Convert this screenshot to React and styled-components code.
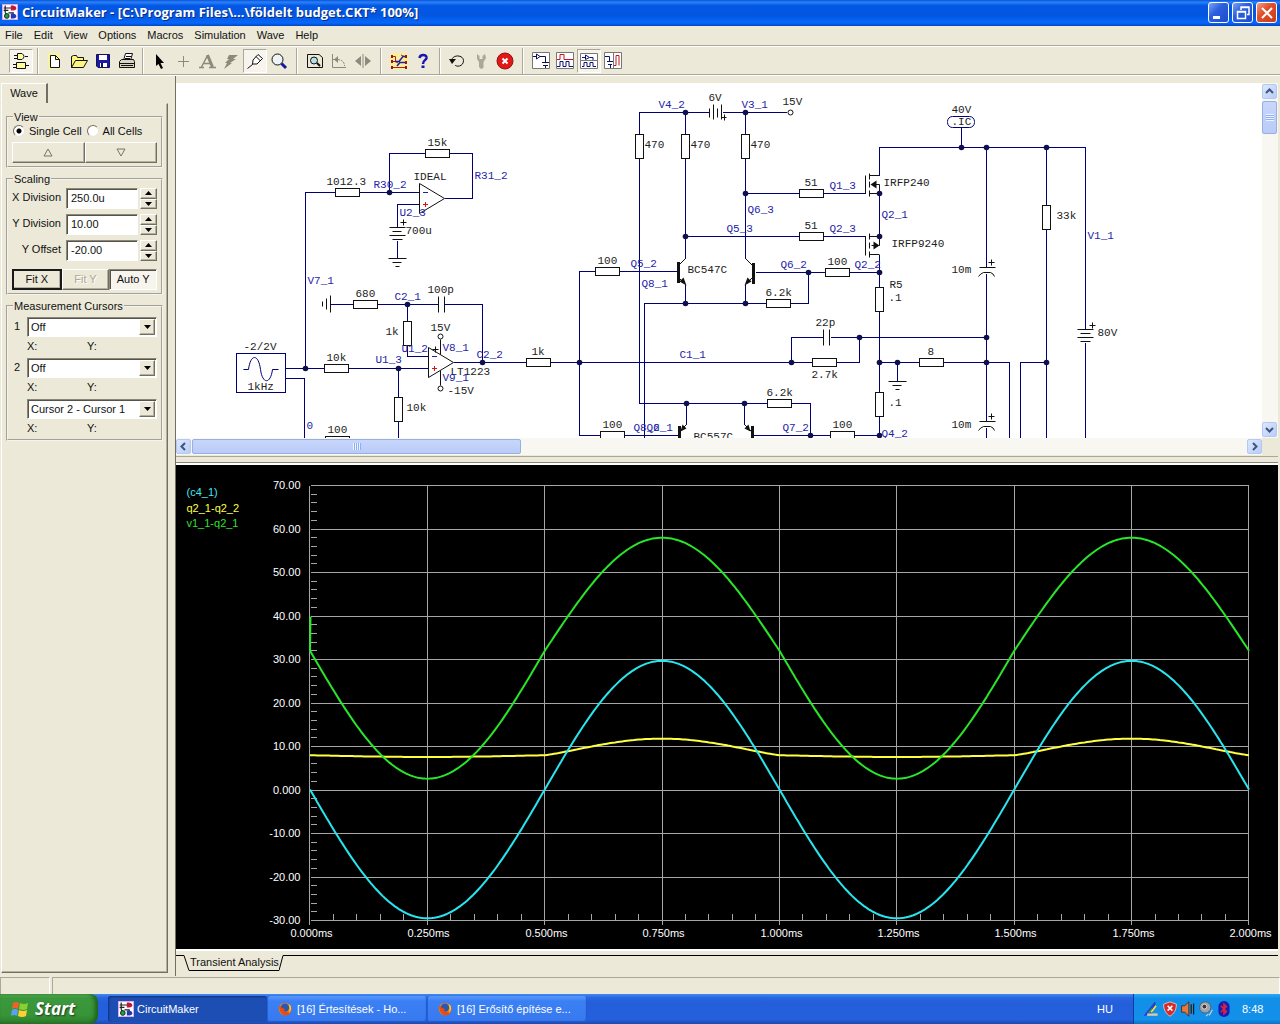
import React, { useState } from 'react'
import styled, { createGlobalStyle, css } from 'styled-components'

// schematic data, in sheet units

const wires = [
  '305,368 305,192 335,192', '359,192 419,192', '389,192 389,153 425,153', '449,153 472,153 472,198 444,198',
  '419,204 397,204 397,226', '397,240 397,258',
  '330,304 353,304', '377,304 438,304', '444,304 482,304 482,362', '407,304 407,321', '407,345 407,356 428,356',
  '285,368 324,368', '348,368 428,368', '285,378 304,378 304,440', '398,368 398,397', '398,421 398,440',
  '453,362 526,362', '550,362 812,362', '595,271 579,271 579,435 600,435', '619,271 677,271', '624,435 678,435',
  '709,112 639,112 639,134', '639,158 639,403 767,403', '685,112 685,134', '685,158 685,258',
  '722,112 786,112', '745,112 745,134', '745,158 745,258', '745,193 799,193', '685,236 799,236',
  '685,284 685,303', '745,284 745,303', '766,303 644,303 644,440', '790,303 808,303 808,272',
  '755,272 825,272', '849,272 879,272', '686,403 686,424', '744,403 744,424', '791,403 810,403 810,435',
  '753,435 830,435', '854,435 879,435', '823,193 865,193', '823,236 865,236',
  '879,175 879,147 1085,147 1085,329', '879,193 879,236', '879,254 879,287', '879,311 879,392', '879,416 879,435',
  '823,337 791,337 791,362', '830,337 986,337', '836,362 859,362 859,337', '879,362 919,362', '897,362 897,381',
  '943,362 1009,362 1009,440', '961,127 961,147', '986,147 986,267', '986,273 986,421', '986,427 986,440',
  '1046,147 1046,205', '1046,229 1046,440', '1046,362 1020,362 1020,440', '1085,342 1085,440'
]

const junctions = [
  [389, 192], [407, 304], [305, 368], [398, 368], [482, 362], [685, 112], [745, 112], [745, 193], [685, 236],
  [685, 303], [745, 303], [808, 272], [579, 362], [686, 403], [744, 403], [810, 435], [791, 362], [859, 337],
  [879, 193], [879, 236], [879, 272], [879, 362], [897, 362], [879, 435], [961, 147], [986, 147], [1046, 147],
  [986, 337], [986, 362], [1046, 362]
]

// left end of each resistor body
const horizontalResistors = [
  [425, 153], [335, 192], [353, 304], [324, 368], [325, 440], [526, 362], [595, 271], [766, 303], [767, 403],
  [600, 435], [799, 193], [799, 236], [825, 272], [812, 362], [830, 435], [919, 362]
]

// top end of each resistor body
const verticalResistors = [
  [407, 321], [398, 397], [639, 134], [685, 134], [745, 134], [879, 287], [879, 392], [1046, 205]
]

const partLabels = [
  ['15k', 427, 145], ['IDEAL', 413, 179], ['1012.3', 326, 184], ['700u', 405, 233], ['680', 355, 296],
  ['100p', 427, 292], ['1k', 385, 334], ['15V', 430, 330], ['LT1223', 450, 374], ['-15V', 447, 393],
  ['-2/2V', 243, 349], ['10k', 326, 360], ['1kHz', 247, 389], ['10k', 406, 410], ['100', 327, 432],
  ['6V', 708, 100], ['15V', 782, 104], ['470', 644, 147], ['470', 690, 147], ['470', 750, 147],
  ['100', 597, 263], ['BC547C', 687, 272], ['6.2k', 765, 295], ['1k', 531, 354], ['6.2k', 766, 395],
  ['100', 602, 427], ['BC557C', 693, 439], ['51', 804, 185], ['IRFP240', 883, 185], ['51', 804, 228],
  ['IRFP9240', 891, 246], ['100', 827, 264], ['R5', 889, 287], ['.1', 888, 300], ['22p', 815, 325],
  ['8', 927, 354], ['2.7k', 811, 377], ['.1', 888, 405], ['100', 832, 427], ['40V', 951, 112],
  ['.IC', 951, 124], ['33k', 1056, 218], ['10m', 951, 272], ['80V', 1097, 335], ['10m', 951, 427]
]

const nodeLabels = [
  ['R30_2', 373, 187], ['R31_2', 474, 178], ['U2_3', 399, 215], ['V7_1', 307, 283], ['C2_1', 394, 299],
  ['U1_2', 401, 351], ['V8_1', 442, 350], ['C2_2', 476, 357], ['U1_3', 375, 362], ['V9_1', 442, 380],
  ['0', 306, 428], ['V4_2', 658, 107], ['V3_1', 741, 107], ['Q6_3', 747, 212], ['Q5_3', 726, 231],
  ['Q5_2', 630, 266], ['Q8_1', 641, 286], ['Q6_2', 780, 267], ['C1_1', 679, 357], ['Q8_2', 633, 430],
  ['Q6_1', 646, 430], ['Q7_2', 782, 430], ['Q1_3', 829, 188], ['Q2_1', 881, 217], ['Q2_3', 829, 231],
  ['Q2_2', 854, 267], ['Q4_2', 881, 436], ['V1_1', 1087, 238]
]

const symbols = [
  // op amps
  'M419 183L444 198L419 213Z M428 347L453 362L428 377Z M440 339V354 M440 370V385 M432 349H438 M435 346V352',
  // bias battery and its ground
  'M389 227H405 M392 231H401 M389 235H405 M392 239H402 M388 258H406 M392 262H401 M395 266H399 M400 222H406 M403 219V225',
  // ground and capacitor of the filter
  'M330 295V312 M326 298V309 M322 301V306 M438 296V312 M444 296V312',
  // 6V battery
  'M709 108V117 M713 104V119 M717 108V117 M721 104V119 M721 117H726 M724 114V120',
  // transistors
  'M677 266L685 258 M677 276L685 284 M753 266L745 258 M753 276L745 284 M678 432L686 424 M752 432L744 424',
  // power mosfets
  'M865 175V193 M869 173V179 M869 181V187 M869 190V196 M869 175H879 M869 193H879 M871 184H879V193',
  'M865 236V255 M869 233V239 M869 242V248 M869 251V257 M869 236H879V245H871 M869 254H879',
  // feedback capacitor, load ground
  'M823 329V345 M829 329V345 M888 381H906 M892 385H901 M895 389H899',
  // reservoir capacitors
  'M979 267H995 M978 276Q980 273 983 272H990Q993 273 994 276 M988 262H994 M991 259V265',
  'M979 421H995 M978 430Q980 427 983 426H990Q993 427 994 430 M988 416H994 M991 413V419',
  // main supply
  'M1077 329H1093 M1080 333H1090 M1077 337H1093 M1080 341H1090 M1089 325H1095 M1092 322V328'
]

// plot scale

const plot = { left: 310, right: 1249, top: 485, bottom: 920, maxMs: 2, minV: -30, maxV: 70 }

const toX = ms => plot.left + (ms / plot.maxMs) * (plot.right - plot.left)
const toY = v => plot.bottom - ((v - plot.minV) / (plot.maxV - plot.minV)) * (plot.bottom - plot.top)

const trace = fn => {
  const points = []
  for (let i = 0; i <= 400; i++) {
    const ms = (i / 400) * plot.maxMs
    points.push(`${(toX(ms) - 0.5).toFixed(1)},${toY(fn(-Math.sin(2 * Math.PI * ms))).toFixed(1)}`)
  }
  return points.join(' ')
}

const traces = [
  { color: '#ffff40', points: trace(s => (s > 0 ? 8 + 3.8 * Math.pow(s, 1.2) : 8 + 0.4 * s)) },
  { color: '#28e628', points: `310,616 ${trace(s => 32 + (s > 0 ? 26 : 29.4) * s)}` },
  { color: '#28e6f0', points: trace(s => 0.1 + 29.6 * s) }
]

const voltTicks = [70, 60, 50, 40, 30, 20, 10, 0, -10, -20, -30]
const timeTicks = [0, 0.25, 0.5, 0.75, 1, 1.25, 1.5, 1.75, 2]
const range = n => Array.from({ length: n }, (_, i) => i)

const Schematic = () => (
  <Drawing role="img" aria-label="Amplifier schematic">
    <g transform="translate(-175.5 -82.5)" fill="none" shapeRendering="crispEdges">
      <g stroke="#000078">
        {wires.map(w => <polyline key={w} points={w} />)}
        <rect x="236" y="353" width="49" height="39" />
        <path d="M243 369H248C250 353 258 353 260 369C262 384 270 384 272 369H278" shapeRendering="auto" />
      </g>
      <g stroke="#111">
        {symbols.map(d => <path key={d} d={d} shapeRendering="auto" />)}
        {horizontalResistors.map(([x, y]) => <rect key={`${x}-${y}`} x={x} y={y - 4} width="24" height="8" fill="#fff" />)}
        {verticalResistors.map(([x, y]) => <rect key={`${x}-${y}`} x={x - 4} y={y} width="8" height="24" fill="#fff" />)}
      </g>
      <g stroke="#111" shapeRendering="auto" fill="#fff">
        <circle cx="440" cy="336" r="2.5" />
        <circle cx="440" cy="388" r="2.5" />
        <circle cx="790" cy="112" r="2.5" />
      </g>
      <g stroke="#111" strokeWidth="3">
        <path d="M678 261V282 M753 262V283 M679 425V440 M752 425V440" />
      </g>
      <g fill="#111" shapeRendering="auto">
        <path d="M686 285L679 281L683 277Z M744 285L751 281L747 277Z M680 431L682 424L686 428Z M750 431L748 424L744 428Z" />
        <path d="M870 184L876 180V188Z M879 245L873 241V249Z" />
      </g>
      <rect x="947" y="116" width="27" height="11" rx="5" stroke="#000078" shapeRendering="auto" />
      <path d="M422 192H427 M431 356H436" stroke="#2020a0" />
      <path d="M422 204H427 M424.5 201.5V206.5 M431 368H436 M433.5 365.5V370.5" stroke="#e01010" />
      <g fill="#10104c" shapeRendering="auto">
        {junctions.map(([x, y]) => <circle key={`${x}-${y}`} cx={x} cy={y} r="2.8" />)}
      </g>
      <PartText>
        {partLabels.map(([text, x, y]) => <text key={`${x}-${y}`} x={x} y={y}>{text}</text>)}
      </PartText>
      <NodeText>
        {nodeLabels.map(([text, x, y]) => <text key={`${x}-${y}`} x={x} y={y}>{text}</text>)}
      </NodeText>
    </g>
  </Drawing>
)

const Waveforms = () => (
  <Drawing role="img" aria-label="Transient analysis waveforms">
    <g transform="translate(-175.5 -464.5)" fill="none">
      <g stroke="#a6a6a6" shapeRendering="crispEdges">
        {voltTicks.map(v => <path key={v} d={`M${plot.left} ${Math.round(toY(v))}H${plot.right - 1}`} />)}
        {timeTicks.map(t => <path key={t} d={`M${Math.round(toX(t) - 0.6)} ${plot.top}V${plot.bottom + 4}`} />)}
        {range(50).map(i => <path key={i} d={`M310 ${Math.round(toY(70 - i * 2))}H316`} />)}
        {range(40).map(i => <path key={i} d={`M${Math.round(toX(i / 20) - 0.6)} 913V920`} />)}
      </g>
      {traces.map(t => <polyline key={t.color} points={t.points} stroke={t.color} strokeWidth="2" />)}
      <AxisText textAnchor="end">
        {voltTicks.map(v => (
          <text key={v} x="300" y={Math.round(toY(v)) + 3}>{v === 0 ? '0.000' : v.toFixed(2)}</text>
        ))}
      </AxisText>
      <AxisText textAnchor="middle">
        {timeTicks.map(t => <text key={t} x={Math.round(toX(t)) + 1} y="936">{`${t.toFixed(3)}ms`}</text>)}
      </AxisText>
      <AxisText>
        <text x="186" y="495" fill="#40e8f0">(c4_1)</text>
        <text x="186" y="511" fill="#ffff40">q2_1-q2_2</text>
        <text x="186" y="526" fill="#30e030">v1_1-q2_1</text>
      </AxisText>
    </g>
  </Drawing>
)

// icons, all on a 20 unit grid

const Icon = ({ size = 20, children }) => (
  <svg width={size} height={size} viewBox="0 0 20 20" fill="none" stroke="#111" strokeWidth="1" aria-hidden="true">
    {children}
  </svg>
)

const AppIcon = () => (
  <Icon size={16}>
    <rect x="0" y="0" width="20" height="20" fill="#fff" stroke="#d898e8" strokeWidth="2" />
    <path d="M2 5H12M4 2V11M2 8H8M8 11H14V14M4 11L7 14" stroke="#222" strokeWidth="1.500" />
    <path d="M11 2H14Q18 3 18 5Q18 8 14 8H11Z" fill="#c01838" stroke="none" />
    <circle cx="6" cy="15" r="3" fill="#18a048" />
    <path d="M11 12H14Q18 13 18 15Q18 18 14 18H11Z" fill="#2038b0" stroke="none" />
  </Icon>
)

const FirefoxIcon = () => (
  <Icon size={14}>
    <circle cx="10" cy="10" r="9" fill="#f07818" stroke="none" />
    <circle cx="10" cy="8" r="6" fill="#2858b0" stroke="none" />
    <path d="M2 5C1 14 6 19 11 19C16 19 19 15 19 10C18 13 15 15 12 14C8 14 8 11 10 10C7 9 4 8 2 5Z" fill="#e84c10" stroke="none" />
    <path d="M17 4C20 8 19 14 15 16C17 12 17 8 15 4Z" fill="#ffc830" stroke="none" />
  </Icon>
)

const WindowsLogo = () => (
  <Icon>
    <path d="M3 4Q6 2 9 4L8 10Q5 8 2 10Z" fill="#f06028" stroke="none" />
    <path d="M10 4Q14 6 18 4L17 10Q13 12 9 10Z" fill="#8cd030" stroke="none" />
    <path d="M2 11Q5 9 8 11L7 17Q4 15 1 17Z" fill="#58a0f8" stroke="none" />
    <path d="M9 11Q13 13 17 11L16 17Q12 19 8 17Z" fill="#ffd030" stroke="none" />
  </Icon>
)

const toolGroups = [
  {
    gap: 10,
    tools: [
      { name: 'Parts', pressed: true, art: <><path d="M6.500 2.500H11Q15 5.500 11 8.500H6.500Z M3 4.500H6 M3 7.500H6 M14 5.500H17" fill="#ffffa0" /><path d="M5.500 11.500H14.500V17.500H5.500Z M2 13.500H5 M2 16.500H5 M15 14.500H18" fill="#ffffa0" /></> }
    ]
  },
  {
    gap: 8,
    tools: [
      { name: 'New', art: <><path d="M3 2H15V18H3Z" fill="#ffff60" stroke="none" opacity=".5" /><path d="M5.500 4.500H10.500L14.500 8.500V16.500H5.500Z M10.500 4.500V8.500H14.500" fill="#fff" /></> },
      { name: 'Open', art: <path d="M2.500 16.500V5.500L4.500 4.500H7.500L8.500 6.500H14.500V9.500M2.500 16.500L6.500 9.500H18.500L14.500 16.500Z" fill="#fff480" /> },
      { name: 'Save', art: <><path d="M3.500 3.500H16.500V16.500H5L3.500 15Z" fill="#1818a0" stroke="#101060" /><path d="M6 4H14V9H6ZM7 12H14V16H7Z" fill="#fff" stroke="none" /><path d="M8 12H10V16H8Z" fill="#101060" stroke="none" /></> },
      { name: 'Print', art: <><path d="M6.500 9.500L8.500 2.500H15.500L13.500 9.500Z M9 5.500H14 M8 7.500H13" fill="#fff" /><path d="M2.500 10.500L4.500 8.500H16.500L17.500 10.500V16.500H2.500Z M2.500 12.500H17.500 M4 14.500H16" fill="#d8d4c0" /></> }
    ]
  },
  {
    gap: 12,
    tools: [
      { name: 'Select', art: <path d="M7 3L15 12H11.500L14 17L12 18L9.500 13L7 15Z" fill="#000" stroke="none" /> },
      { name: 'Wire', art: <path d="M10.500 5V16M5 10.500H16" stroke="#8c8a7c" /> },
      { name: 'Text', art: <path d="M2 16.500H7M12 16.500H19M4.500 16L10.500 4.500M7 12.500H13" stroke="#8c8a7c" strokeWidth="1.500" />, bold: 'M10.500 4L15.500 16' },
      { name: 'Delete', art: <path d="M8 4H17L12 8H15L9 12H11L3 18L6 12H4L8 8H6Z" fill="#8c8a7c" stroke="none" /> },
      { name: 'Probe', pressed: true, art: <path d="M2.500 17.500L7.500 13.500L8 9L13 3.500L17.500 7.500L12 13H8L7.500 13.500 M11 5.500L15.500 10" fill="#fff" /> },
      { name: 'Zoom', art: <><circle cx="8.500" cy="8.500" r="5.500" fill="#eef4f4" /><path d="M12.500 12.500L17 17" stroke="#1818a0" strokeWidth="3" /></> }
    ]
  },
  {
    gap: 12,
    tools: [
      { name: 'Fit page', art: <><path d="M2.500 3.500H14L17.500 6.500V16.500H2.500Z" /><circle cx="9" cy="9.500" r="3.500" fill="#b8e0e0" /><path d="M12 12L15 15" strokeWidth="2" /></> },
      { name: 'Rotate', art: <><path d="M3.500 3V16.500H17M4 8.500H6" stroke="#8c8a7c" /><path d="M6 8.500H9C13 9 15.500 11 15.500 15" stroke="#8c8a7c" strokeDasharray="2 1" /><path d="M5 8.500L9 5V12Z" fill="#8c8a7c" stroke="none" /></> },
      { name: 'Mirror', art: <><path d="M2 10L8 5V15ZM18 10L12 5V15Z" fill="#8c8a7c" stroke="none" /><path d="M10 3V17" stroke="#8c8a7c" /></> }
    ]
  },
  {
    gap: 10,
    tools: [
      { name: 'Simulate', art: <><rect x="1" y="2" width="18" height="16" rx="4" fill="#fff080" stroke="none" opacity=".7" /><path d="M3 5.500H6.500V10.500H3M6.500 10.500L9 12M3 16.500H16M15 5.500L12 4" stroke="#b02020" /><path d="M6 10.500H10L14 5.500H17M8 15L11 11.500H17" stroke="#2020a0" strokeWidth="1.500" /><path d="M2 4H4V7H2ZM2 9H4V12H2ZM2 15H4V18H2ZM16 4H18V7H16ZM16 10H18V13H16ZM16 15H18V18H16Z" fill="#901818" stroke="none" /></> },
      { name: 'Help', art: <><path d="M6.500 7C7 3 14 3 13.500 7C13 9.500 10 9 10 13" stroke="#1818b0" strokeWidth="2.500" /><path d="M8.500 14.500H11.500V17H8.500Z" fill="#1818b0" stroke="none" /></> }
    ]
  },
  {
    gap: 12,
    tools: [
      { name: 'Reset', art: <><path d="M5 9C5 4 16 3 16.500 9.500C16.500 16 9 16 8 14" /><path d="M2 8H9L5 13Z" fill="#111" stroke="none" /></> },
      { name: 'Step', art: <path d="M6 3L8.500 5V8H11.500V5L14 3L15 7L12.500 11V17L10 18L8 16V11L6 8Z" fill="#aaa898" stroke="none" /> },
      { name: 'Stop', art: <><circle cx="10" cy="10" r="8" fill="#e01818" stroke="#981010" /><path d="M7.500 7.500L12.500 12.500M12.500 7.500L7.500 12.500" stroke="#fff" strokeWidth="2" /></> }
    ]
  },
  {
    gap: 0,
    tools: [
      { name: 'Schematic view', art: <><path d="M1.500 1.500H18.500V17.500H1.500Z" fill="#fff" stroke="#777" /><path d="M2 5.500H5M9 5.500H14.500V11M11 11.500H18M12 14.500H17M14.500 15V17" stroke="#101050" /><path d="M5.500 3L9 5.500L5.500 8Z" fill="#fff" stroke="#101050" /></> },
      { name: 'Wave view', art: <><path d="M1.500 1.500H18.500V17.500H1.500Z" fill="#fff" stroke="#777" /><path d="M2 8.500H5V3.500H9V8.500H18" stroke="#c01818" /><path d="M2 15.500H5V10.500H8V15.500H11V10.500H14V15.500H18" stroke="#101070" /></> },
      { name: 'Split horizontal', pressed: true, art: <><path d="M1.500 2.500H18.500V17.500H1.500ZM1 9.500H19" fill="#fff" stroke="#777" /><path d="M3 6.500H6M11 6.500H14V9M6.500 4L10.500 6.500L6.500 8.500Z M3 15.500H5V11.500H8V15.500H11V11.500H14V15.500H17" stroke="#101070" /></> },
      { name: 'Split vertical', art: <><path d="M1.500 1.500H18.500V17.500H1.500ZM10.500 1V18" fill="#fff" stroke="#777" /><path d="M2 5.500H6.500V10M4 10.500H10M5 13.500H9M7.500 14V17" stroke="#101070" /><path d="M11 14.500H13V4.500H16V14.500" stroke="#c01818" /></> }
    ]
  }
]

const Toolbar = () => (
  <ToolRow>
    {toolGroups.map(({ gap, tools }, i) => (
      <React.Fragment key={i}>
        {tools.map(({ name, pressed, art, bold }) => (
          <ToolButton key={name} $pressed={pressed} aria-label={name}>
            <Icon>
              {art}
              {bold && <path d={bold} stroke="#8c8a7c" strokeWidth="3" />}
            </Icon>
          </ToolButton>
        ))}
        {gap > 0 && <Separator $gap={gap} />}
      </React.Fragment>
    ))}
  </ToolRow>
)

const Arrow = ({ up, hollow }) => (
  <svg width={hollow ? 10 : 7} height={hollow ? 9 : 4} viewBox={hollow ? '0 0 10 9' : '0 0 7 4'} aria-hidden="true">
    {hollow
      ? <path d={up ? 'M5 1L9 8H1Z' : 'M5 8L9 1H1Z'} fill="none" stroke="#777565" />
      : <path d={up ? 'M3.500 0L7 4H0Z' : 'M3.500 4L7 0H0Z'} fill="#000" />}
  </svg>
)

const NumberField = ({ id, label, initial }) => {
  const [value, setValue] = useState(initial)
  return (
    <FieldRow>
      <label htmlFor={id}>{label}</label>
      <TextInput id={id} value={value} onChange={e => setValue(e.target.value)} />
      <Spinner>
        <SpinButton aria-label={`${label} up`}><Arrow up /></SpinButton>
        <SpinButton aria-label={`${label} down`}><Arrow /></SpinButton>
      </Spinner>
    </FieldRow>
  )
}

const CursorField = ({ id, label, value }) => (
  <>
    <CursorRow>
      <label htmlFor={id}>{label}</label>
      <SelectBox>
        <select id={id} defaultValue={value} aria-label={label ? undefined : 'Cursor difference'}>
          <option>{value}</option>
        </select>
        <SelectArrow><Arrow /></SelectArrow>
      </SelectBox>
    </CursorRow>
    <Readout><span>X:</span><span>Y:</span></Readout>
  </>
)

const WavePanel = () => {
  const [cell, setCell] = useState('single')
  return (
    <Sidebar>
      <WaveTab>Wave</WaveTab>
      <Panel>
        <Group>
          <legend>View</legend>
          <RadioRow>
            <label><input type="radio" name="cell" checked={cell === 'single'} onChange={() => setCell('single')} />Single Cell</label>
            <label><input type="radio" name="cell" checked={cell === 'all'} onChange={() => setCell('all')} />All Cells</label>
          </RadioRow>
          <ButtonRow>
            <PushButton aria-label="Previous cell"><Arrow hollow up /></PushButton>
            <PushButton aria-label="Next cell"><Arrow hollow /></PushButton>
          </ButtonRow>
        </Group>
        <Group>
          <legend>Scaling</legend>
          <Fields>
            <NumberField id="x-division" label="X Division" initial="250.0u" />
            <NumberField id="y-division" label="Y Division" initial="10.00" />
            <NumberField id="y-offset" label="Y Offset" initial="-20.00" />
          </Fields>
          <ButtonRow>
            <PushButton $focused>Fit X</PushButton>
            <PushButton disabled>Fit Y</PushButton>
            <PushButton $pressed>Auto Y</PushButton>
          </ButtonRow>
        </Group>
        <Group>
          <legend>Measurement Cursors</legend>
          <Cursors>
            <CursorField id="cursor-1" label="1" value="Off" />
            <CursorField id="cursor-2" label="2" value="Off" />
            <CursorField id="cursor-diff" label="" value="Cursor 2 - Cursor 1" />
          </Cursors>
        </Group>
      </Panel>
    </Sidebar>
  )
}

const Chevron = ({ d }) => (
  <svg width="9" height="9" viewBox="0 0 9 9" fill="none" stroke="#40557c" strokeWidth="2" aria-hidden="true"><path d={d} /></svg>
)

const App = () => (
  <Desktop>
    <GlobalStyle />
    <TitleBar>
      <AppIcon />
      <h1>CircuitMaker - [C:\Program Files\...\földelt budget.CKT* 100%]</h1>
      <WindowButton aria-label="Minimize"><Icon><path d="M4 14.500H11" stroke="#fff" strokeWidth="3" /></Icon></WindowButton>
      <WindowButton aria-label="Restore"><Icon><path d="M8 7V4.500H16V11.500H14M7.500 4H16.500M4.500 8.500H12.500V15.500H4.500ZM4 9H13" stroke="#fff" strokeWidth="1.500" /></Icon></WindowButton>
      <WindowButton $close aria-label="Close"><Icon><path d="M5 5L15 15M15 5L5 15" stroke="#fff" strokeWidth="2" /></Icon></WindowButton>
    </TitleBar>
    <MenuBar>
      {['File', 'Edit', 'View', 'Options', 'Macros', 'Simulation', 'Wave', 'Help'].map(m => <button key={m}>{m}</button>)}
    </MenuBar>
    <Toolbar />
    <Workspace>
      <WavePanel />
      <Documents>
        <SheetPane>
          <Schematic />
          <Scrollbar $vertical>
            <ScrollButton aria-label="Scroll up"><Chevron d="M1 6L4.500 2.500L8 6" /></ScrollButton>
            <Thumb $vertical />
            <ScrollButton aria-label="Scroll down"><Chevron d="M1 3L4.500 6.500L8 3" /></ScrollButton>
          </Scrollbar>
          <Scrollbar>
            <ScrollButton aria-label="Scroll left"><Chevron d="M6 1L2.500 4.500L6 8" /></ScrollButton>
            <Thumb />
            <ScrollButton aria-label="Scroll right"><Chevron d="M3 1L6.500 4.500L3 8" /></ScrollButton>
          </Scrollbar>
        </SheetPane>
        <Splitter />
        <PlotPane><Waveforms /></PlotPane>
        <TabStrip>
          <svg width="14" height="16" viewBox="0 0 14 16" fill="none" stroke="#000" aria-hidden="true"><path d="M0 .5H8L13 15.500H14" /></svg>
          <SheetTab>Transient Analysis</SheetTab>
          <svg width="6" height="16" viewBox="0 0 6 16" fill="none" stroke="#000" aria-hidden="true"><path d="M0 15.500L4 .5H6" /></svg>
          <TabRule />
        </TabStrip>
      </Documents>
    </Workspace>
    <StatusBar><span /><span /></StatusBar>
    <Taskbar>
      <StartButton><WindowsLogo />Start</StartButton>
      <Task $active><AppIcon />CircuitMaker</Task>
      <Task><FirefoxIcon />[16] Értesítések - Ho...</Task>
      <Task><FirefoxIcon />[16] Erősítő építése e...</Task>
      <Language>HU</Language>
      <Tray>
        <Icon size={16}><path d="M2 17L14 2L9 15Z" fill="#30b040" stroke="#2040d0" strokeWidth="2" /><path d="M9 14L15 6" stroke="#ffe030" strokeWidth="2" /><path d="M4 17H17" stroke="#d8c8b0" strokeWidth="3" /></Icon>
        <Icon size={16}><path d="M10 1L18 4C18 11 15 16 10 19C5 16 2 11 2 4Z" fill="#d82828" stroke="#e8d8d8" /><path d="M7 6L13 12M13 6L7 12" stroke="#fff" strokeWidth="2" /></Icon>
        <Icon size={16}><path d="M2 6H6L11 1V19L6 14H2Z" fill="#e87838" stroke="#402010" /><path d="M14 4V16M17 3V17" stroke="#201810" strokeWidth="1.500" /></Icon>
        <Icon size={16}><circle cx="9" cy="8" r="7" fill="#a0a4a8" stroke="#50585c" /><circle cx="8" cy="7" r="3" fill="#303840" stroke="#e8e8e8" /><path d="M14 18L18 11M10 19L13 16" stroke="#c0d0e0" strokeWidth="1.500" /></Icon>
        <Icon size={16}><rect x="3" y="0" width="14" height="20" rx="7" fill="#1020b0" stroke="none" /><path d="M6 6L13 13L10 16V4L13 7L6 14" stroke="#e02040" strokeWidth="2" /></Icon>
        <time>8:48</time>
      </Tray>
    </Taskbar>
  </Desktop>
)

// styles

const GlobalStyle = createGlobalStyle`
  * {
    box-sizing: border-box;
  }

  body {
    margin: 0;
    background: #ece9d8;
    color: #111;
    font: 11px/13px "Liberation Sans", Arial, sans-serif;
  }

  button, input, select {
    margin: 0;
    padding: 0;
    border: none;
    border-radius: 0;
    background: none;
    color: inherit;
    font: inherit;
  }
`

const raised = css`
  border: 1px solid;
  border-color: #fff #716f64 #716f64 #fff;
  box-shadow: inset -1px -1px #b5b19f;
`

const sunken = css`
  border: 1px solid;
  border-color: #8a8778 #fff #fff #8a8778;
  box-shadow: inset 1px 1px #55534a;
`

const Desktop = styled.div`
  display: flex;
  flex-direction: column;
  min-height: 100vh;
  background: #ece9d8;
`

const TitleBar = styled.header`
  display: flex;
  align-items: center;
  gap: 3px;
  height: 26px;
  padding: 0 3px 2px 2px;
  background: linear-gradient(#0a52d8, #2a82fa 8%, #0358e4 22%, #0356e0 60%, #0668fc 88%, #0344c0);

  h1 {
    flex: 1;
    margin: 0 0 0 1px;
    color: #fff;
    font: 700 13px/20px "Open Sans", "Noto Sans", sans-serif;
    text-shadow: 1px 1px #0a2a80;
  }
`

const WindowButton = styled.button`
  display: grid;
  place-items: center;
  width: 21px;
  height: 21px;
  border: 1px solid #fff;
  border-radius: 3px;
  background: ${props => props.$close
    ? 'linear-gradient(135deg, #f0a088, #e0502c 40%, #c83c14)'
    : 'linear-gradient(135deg, #7ca4f4, #2c60e0 40%, #1c4cc8)'};
`

const MenuBar = styled.nav`
  display: flex;
  gap: 11px;
  height: 20px;
  padding: 0 5px;
  border-bottom: 1px solid #aca899;
`

const ToolRow = styled.div`
  display: flex;
  align-items: center;
  height: 29px;
  padding: 0 9px;
  border-top: 1px solid #fff;
  border-bottom: 1px solid #aca899;
`

const ToolButton = styled.button`
  display: grid;
  place-items: center;
  width: 24px;
  height: 24px;
  ${props => props.$pressed && css`
    border: 1px solid;
    border-color: #aca899 #fff #fff #aca899;
    background: #f6f4ec;
  `}
`

const Separator = styled.span`
  width: ${props => props.$gap}px;
  height: 26px;
  background: linear-gradient(90deg, #aca899 50%, #fff 50%) center / 2px 100% no-repeat;
`

const Workspace = styled.main`
  display: flex;
  flex: 1;
  border-top: 1px solid #fff;
`

const Sidebar = styled.aside`
  display: flex;
  flex-direction: column;
  width: 168px;
  padding: 7px 0 3px 1px;
`

const WaveTab = styled.button`
  align-self: flex-start;
  width: 47px;
  height: 20px;
  border-top: 1px solid #fff;
  border-left: 1px solid #fff;
  border-right: 2px solid #716f64;
`

const Panel = styled.div`
  flex: 1;
  padding: 7px 4px 0 4px;
  border: 1px solid;
  border-color: transparent #716f64 #716f64 #fff;
  box-shadow: inset -1px -1px #b5b19f;
`

const Group = styled.fieldset`
  min-width: 0;
  margin: 0 0 5px;
  padding: 0 4px 3px;
  border: 2px groove #f6f4ea;

  legend {
    margin-left: 1px;
    padding: 0 1px;
    line-height: 12px;
  }
`

const RadioRow = styled.div`
  display: flex;
  gap: 4px;
  height: 19px;

  label {
    display: flex;
    align-items: center;
    gap: 4px;
    height: 16px;
    white-space: nowrap;
  }

  input {
    appearance: none;
    width: 12px;
    height: 12px;
    margin-left: 1px;
    border: 1px solid;
    border-color: #716f64 #e8e6d8 #e8e6d8 #716f64;
    border-radius: 50%;
    background: #fff;
  }

  input:checked {
    background: radial-gradient(#000 2px, #fff 3px);
  }
`

const ButtonRow = styled.div`
  display: flex;
  height: 21px;
`

const PushButton = styled.button`
  flex: 1;
  display: grid;
  place-items: center;
  ${raised}
  ${props => props.$focused && css`
    border: 2px solid #1a1a1a;
  `}
  ${props => props.$pressed && css`
    ${sunken}
    background: #f6f4ec;
  `}

  &:disabled {
    color: #aca899;
    text-shadow: 1px 1px #fff;
  }
`

const Fields = styled.div`
  display: flex;
  flex-direction: column;
  gap: 5px;
  padding: 3px 0 8px;
`

const FieldRow = styled.div`
  display: flex;
  height: 21px;

  label {
    flex: 1;
    padding-top: 3px;
    padding-right: 5px;
    text-align: right;
    white-space: nowrap;
  }
`

const TextInput = styled.input`
  width: 72px;
  padding: 0 4px;
  background: #fff;
  ${sunken}
`

const Spinner = styled.span`
  display: flex;
  flex-direction: column;
  width: 17px;
  margin-left: 2px;
`

const SpinButton = styled.button`
  flex: 1;
  display: grid;
  place-items: center;
  ${raised}
`

const Cursors = styled.div`
  padding: 5px 0 0;
`

const CursorRow = styled.div`
  display: flex;
  height: 20px;

  label {
    width: 15px;
    padding: 3px 2px;
  }
`

const SelectBox = styled.span`
  display: flex;
  flex: 1;
  padding: 1px;
  background: #fff;
  ${sunken}

  select {
    flex: 1;
    min-width: 0;
    padding-left: 2px;
    appearance: none;
  }
`

const SelectArrow = styled.span`
  display: grid;
  place-items: center;
  width: 16px;
  background: #ece9d8;
  ${raised}
`

const Readout = styled.div`
  display: grid;
  grid-template-columns: 60px 1fr;
  height: 21px;
  padding: 3px 0 0 15px;

  &:last-child {
    height: 17px;
  }
`

const Documents = styled.section`
  display: flex;
  flex: 1;
  flex-direction: column;
  min-width: 0;
  margin-left: 7px;
  padding: 7px 2px 0 0;
  border-left: 1px solid #716f64;
`

const SheetPane = styled.div`
  display: grid;
  flex: 372 0 0;
  grid-template-columns: minmax(0, 1fr) 16px;
  grid-template-rows: minmax(0, 1fr) 17px;
  min-height: 0;
  background: #ece9d8;
`

// takes the size of its pane, whatever the sheet behind it
const Drawing = styled.svg`
  display: block;
  width: 100%;
  height: 100%;
  min-height: 0;
  overflow: hidden;

  ${SheetPane} & {
    background: #fff;
  }
`

const schematicFont = css`
  stroke: none;
  font-family: "Liberation Mono", "Courier New", monospace;
  font-size: 11px;
`

const PartText = styled.g`
  ${schematicFont}
  fill: #222;
`

const NodeText = styled.g`
  ${schematicFont}
  fill: #2424a8;
`

const AxisText = styled.g`
  fill: #fff;
  font-size: 11px;
`

const Scrollbar = styled.div`
  display: flex;
  flex-direction: ${props => (props.$vertical ? 'column' : 'row')};
  padding: ${props => (props.$vertical ? '1px 0' : '1px 0 0')};
  background: #f8f7f2;

  button:last-child {
    margin-${props => (props.$vertical ? 'top' : 'left')}: auto;
  }
`

const ScrollButton = styled.button`
  display: grid;
  place-items: center;
  width: 15px;
  height: 15px;
  border: 1px solid #b4c8f4;
  border-radius: 2px;
  background: linear-gradient(135deg, #dce8ff, #b8ccf8);
`

const Thumb = styled.div`
  margin: ${props => (props.$vertical ? '2px 0' : '0 1px')};
  width: ${props => (props.$vertical ? '15px' : '329px')};
  height: ${props => (props.$vertical ? '33px' : '15px')};
  border: 1px solid #98b0e0;
  border-radius: 2px;
  background:
    repeating-linear-gradient(${props => (props.$vertical ? '0deg' : '90deg')}, #eef4ff 0 1px, #8cb0f8 1px 2px) center / 8px 7px no-repeat,
    linear-gradient(#c8d6fb, #b9cbf8);
`

const Splitter = styled.div`
  height: 10px;
  border-bottom: 2px solid #fff;
  background: linear-gradient(#aca899, #aca899) 0 1px / 100% 1px no-repeat,
    linear-gradient(#8a8778, #8a8778) 0 7px / 100% 1px no-repeat, #ece9d8;
`

const PlotPane = styled.div`
  flex: 484 0 0;
  min-height: 0;
  background: #000;
`

const TabStrip = styled.div`
  display: flex;
  height: 27px;
  padding-top: 4px;
  border-top: 2px solid #fff;
`

const SheetTab = styled.button`
  height: 16px;
  border-bottom: 1px solid #000;
`

const TabRule = styled.span`
  flex: 1;
  height: 1px;
  background: #000;
`

const StatusBar = styled.footer`
  display: grid;
  grid-template-columns: 50px 1fr;
  gap: 2px;
  height: 18px;
  padding-top: 1px;

  span {
    border-top: 1px solid #aca899;
    border-left: 1px solid #aca899;
    border-right: 1px solid #fff;
  }
`

const Taskbar = styled.div`
  display: flex;
  height: 30px;
  background: linear-gradient(#3f8cf0, #2a66e0 12%, #245edb 30%, #2460dc 85%, #1c48b0);
  color: #fff;
`

const StartButton = styled.button`
  display: flex;
  align-items: center;
  gap: 5px;
  width: 98px;
  margin-right: 10px;
  padding-left: 10px;
  border-radius: 0 8px 8px 0;
  background: linear-gradient(#5fb85c, #3c983c 15%, #379437 70%, #2c7c2c);
  box-shadow: inset -3px 0 4px #1c601c;
  font: italic bold 17px/24px "Open Sans", "Noto Sans", sans-serif;
  text-shadow: 1px 1px 2px #1c3c1c;
`

const Task = styled.button`
  display: flex;
  align-items: center;
  gap: ${props => (props.$active ? 3 : 5)}px;
  flex: 0 1 159px;
  height: 26px;
  margin: 2px 1px 0 0;
  padding-left: 10px;
  border-radius: 3px;
  background: ${props => (props.$active ? '#1d4eb4' : 'linear-gradient(#5a96fa, #3a80f4 20%, #3878ee)')};
  box-shadow: ${props => (props.$active ? 'inset 1px 1px 2px #12307c' : 'inset -1px -1px 1px #2458c4')};
  white-space: nowrap;
`

const Language = styled.span`
  margin-left: auto;
  padding: 9px 20px 0 0;
`

const Tray = styled.div`
  display: flex;
  align-items: center;
  gap: 2px;
  width: 147px;
  padding-left: 10px;
  border-left: 1px solid #0c3c9c;
  background: linear-gradient(#28a8f4, #1290e8 15%, #1290ea 85%, #0c70c4);

  time {
    margin-left: 8px;
  }
`

export default App
